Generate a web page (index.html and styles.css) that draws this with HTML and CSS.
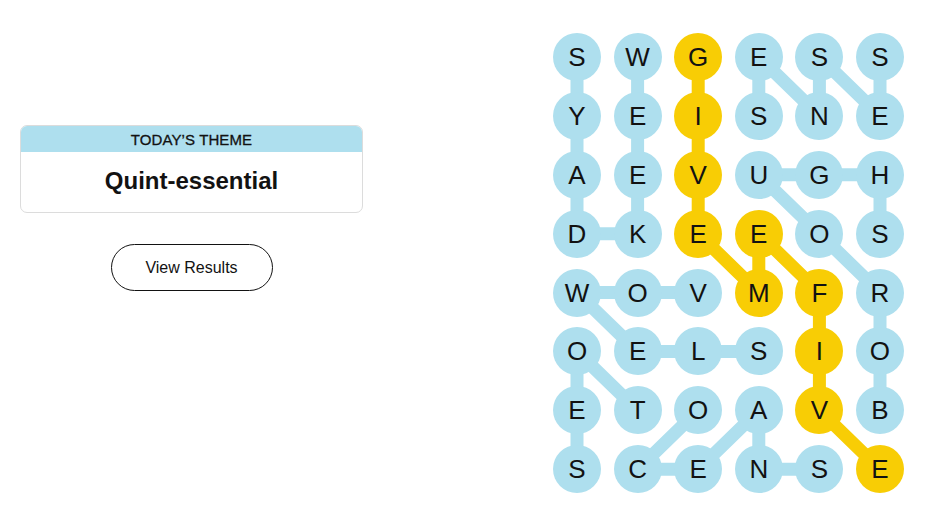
FILE: index.html
```html
<!DOCTYPE html>
<html lang="en">
<head>
<meta charset="utf-8">
<title>Strands</title>
<link rel="stylesheet" href="styles.css">
</head>
<body>
<main class="page">
  <section class="side">
    <div class="theme-card">
      <div class="theme-head">TODAY’S THEME</div>
      <div class="theme-body">Quint-essential</div>
    </div>
    <button class="results-btn">View Results</button>
  </section>

  <section class="board">
    <svg class="links" width="351" height="461" viewBox="0 0 351 461" aria-hidden="true">
      <g class="blue">
        <polyline points="84.6,24 84.6,82.9 84.6,141.8 84.6,200.7 24,200.7 24,141.8 24,82.9 24,24"/>
        <polyline points="205.8,82.9 205.8,24 266.4,82.9 266.4,24 327,82.9 327,24"/>
        <polyline points="327,377.4 327,318.5 327,259.6 266.4,200.7 205.8,141.8 266.4,141.8 327,141.8 327,200.7"/>
        <polyline points="145.2,259.6 84.6,259.6 24,259.6 84.6,318.5 145.2,318.5 205.8,318.5"/>
        <polyline points="84.6,377.4 24,318.5 24,377.4 24,436.3"/>
        <polyline points="145.2,377.4 84.6,436.3 145.2,436.3 205.8,377.4 205.8,436.3 266.4,436.3"/>
      </g>
      <g class="gold">
        <polyline points="145.2,24 145.2,82.9 145.2,141.8 145.2,200.7 205.8,259.6 205.8,200.7 266.4,259.6 266.4,318.5 266.4,377.4 327,436.3"/>
      </g>
    </svg>
    <div class="grid">
      <div class="cell">S</div><div class="cell">W</div><div class="cell found">G</div><div class="cell">E</div><div class="cell">S</div><div class="cell">S</div>
      <div class="cell">Y</div><div class="cell">E</div><div class="cell found">I</div><div class="cell">S</div><div class="cell">N</div><div class="cell">E</div>
      <div class="cell">A</div><div class="cell">E</div><div class="cell found">V</div><div class="cell">U</div><div class="cell">G</div><div class="cell">H</div>
      <div class="cell">D</div><div class="cell">K</div><div class="cell found">E</div><div class="cell found">E</div><div class="cell">O</div><div class="cell">S</div>
      <div class="cell">W</div><div class="cell">O</div><div class="cell">V</div><div class="cell found">M</div><div class="cell found">F</div><div class="cell">R</div>
      <div class="cell">O</div><div class="cell">E</div><div class="cell">L</div><div class="cell">S</div><div class="cell found">I</div><div class="cell">O</div>
      <div class="cell">E</div><div class="cell">T</div><div class="cell">O</div><div class="cell">A</div><div class="cell found">V</div><div class="cell">B</div>
      <div class="cell">S</div><div class="cell">C</div><div class="cell">E</div><div class="cell">N</div><div class="cell">S</div><div class="cell found">E</div>
    </div>
  </section>
</main>
</body>
</html>
```

FILE: styles.css
```css
html, body {
  margin: 0;
  padding: 0;
  background: #ffffff;
}

body {
  font-family: "Liberation Sans", Arial, sans-serif;
  color: #121212;
}

.page {
  display: flex;
  align-items: flex-start;
  padding: 33px 0 0 20px;
}

.side {
  width: 343px;
  margin-top: 92px;
  display: flex;
  flex-direction: column;
  align-items: center;
}

.theme-card {
  width: 100%;
  box-sizing: border-box;
  border: 1px solid #dcdcdc;
  border-radius: 7px;
  overflow: hidden;
}

.theme-head {
  height: 26px;
  line-height: 28px;
  background: #aedfee;
  text-align: center;
  font-size: 15px;
  letter-spacing: 0.1px;
  color: #121212;
  -webkit-text-stroke: 0.3px #121212;
}

.theme-body {
  height: 60px;
  line-height: 58px;
  text-align: center;
  font-size: 24px;
  font-weight: 700;
  color: #121212;
}

.results-btn {
  margin-top: 31px;
  width: 162px;
  height: 47px;
  border: 1px solid #121212;
  border-radius: 24px;
  background: #ffffff;
  font-family: "Liberation Sans", Arial, sans-serif;
  font-size: 16px;
  color: #121212;
  padding: 1px 0 0;
}

.board {
  position: relative;
  margin-left: 190px;
  width: 351px;
  height: 461px;
}

.links {
  position: absolute;
  left: 0;
  top: 0;
}

.links polyline {
  fill: none;
  stroke-width: 13;
  stroke-linejoin: round;
}

.links .blue polyline {
  stroke: #aedfee;
}

.links .gold polyline {
  stroke: #f8cd05;
}

.grid {
  position: relative;
  display: grid;
  grid-template-columns: repeat(6, 48px);
  grid-auto-rows: 48px;
  column-gap: 12.6px;
  row-gap: 10.9px;
}

.cell {
  width: 48px;
  height: 48px;
  border-radius: 50%;
  background: #aedfee;
  display: flex;
  align-items: center;
  justify-content: center;
  font-size: 26px;
  line-height: 48px;
  color: #121212;
}

.cell.found {
  background: #f8cd05;
}
```
